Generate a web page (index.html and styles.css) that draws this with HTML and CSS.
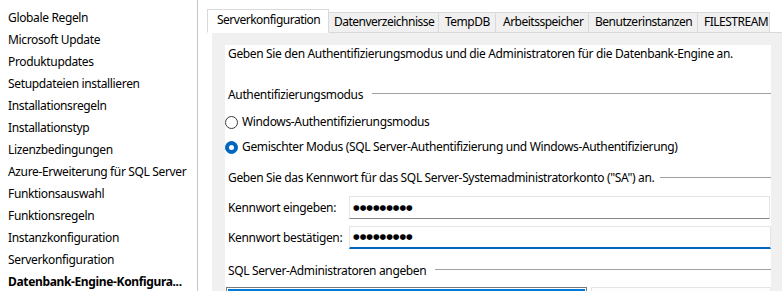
FILE: index.html
```html
<!DOCTYPE html>
<html lang="de">
<head>
<meta charset="utf-8">
<title>Datenbank-Engine-Konfiguration</title>
<link rel="stylesheet" href="styles.css">
</head>
<body>
<div class="app">
  <nav class="steps">
    <div class="step">Globale Regeln</div>
    <div class="step">Microsoft Update</div>
    <div class="step">Produktupdates</div>
    <div class="step">Setupdateien installieren</div>
    <div class="step">Installationsregeln</div>
    <div class="step">Installationstyp</div>
    <div class="step">Lizenzbedingungen</div>
    <div class="step">Azure-Erweiterung für SQL Server</div>
    <div class="step">Funktionsauswahl</div>
    <div class="step">Funktionsregeln</div>
    <div class="step">Instanzkonfiguration</div>
    <div class="step">Serverkonfiguration</div>
    <div class="step step-current">Datenbank-Engine-Konfigura...</div>
  </nav>
  <main class="main">
    <div class="tabs">
      <div class="tab tab-active tab-server">Serverkonfiguration</div>
      <div class="tab tab-data">Datenverzeichnisse</div>
      <div class="tab tab-temp">TempDB</div>
      <div class="tab tab-mem">Arbeitsspeicher</div>
      <div class="tab tab-user">Benutzerinstanzen</div>
      <div class="tab tab-fs">FILESTREAM</div>
    </div>
    <div class="tabpage">
      <div class="panel">
        <p class="intro">Geben Sie den Authentifizierungsmodus und die Administratoren für die Datenbank-Engine an.</p>

        <div class="group group-auth"><span class="group-label">Authentifizierungsmodus</span><span class="group-line"></span></div>

        <div class="radio radio-first"><span class="radio-mark"></span><span>Windows-Authentifizierungsmodus</span></div>
        <div class="radio radio-second"><span class="radio-mark radio-checked"></span><span>Gemischter Modus (SQL Server-Authentifizierung und Windows-Authentifizierung)</span></div>

        <div class="group group-pass"><span class="group-label">Geben Sie das Kennwort für das SQL Server-Systemadministratorkonto ("SA") an.</span><span class="group-line"></span></div>

        <div class="field field-first">
          <span class="field-label">Kennwort eingeben:</span>
          <div class="input"><span class="dots">●●●●●●●●●</span></div>
        </div>
        <div class="field field-second">
          <span class="field-label">Kennwort bestätigen:</span>
          <div class="input input-focus"><span class="dots">●●●●●●●●●</span></div>
        </div>

        <div class="group group-admins"><span class="group-label">SQL Server-Administratoren angeben</span><span class="group-line"></span></div>

        <div class="admins">
          <div class="admin-list"></div>
          <div class="admin-side"></div>
        </div>
      </div>
    </div>
  </main>
</div>
</body>
</html>
```

FILE: styles.css
```css
* { box-sizing: border-box; }

html, body {
  margin: 0;
  padding: 0;
  background: #ffffff;
}

body {
  font-family: "Noto Sans", "Open Sans", sans-serif;
  font-size: 12px;
  letter-spacing: -0.35px;
  color: #000000;
  width: 782px;
  height: 291px;
  overflow: hidden;
}

.app {
  display: flex;
  height: 291px;
  overflow: hidden;
}

/* left step navigation */
.steps {
  width: 198px;
  flex: none;
  border-right: 1px solid #c4c4c4;
  padding: 7px 0 0 8px;
}

.step {
  line-height: 22px;
  height: 22px;
  white-space: nowrap;
}

.step-current {
  font-weight: 700;
}

/* main area */
.main {
  flex: 1;
  display: flex;
  flex-direction: column;
  padding: 9px 0 0 9px;
  min-width: 0;
  overflow: hidden;
}

.tabs {
  display: flex;
  align-items: flex-end;
  border-bottom: 1px solid #d9d9d9;
  height: 24px;
  flex: none;
}

.tab {
  flex: none;
  margin-bottom: -1px;
  margin-left: -1px;
  border: 1px solid #d9d9d9;
  background: #f0f0f0;
  line-height: 16px;
  letter-spacing: -0.5px;
  padding: 1px 0 2px 5px;
  white-space: nowrap;
  overflow: hidden;
}

.tab-active {
  margin-left: 0;
  background: #ffffff;
  border-bottom-color: #ffffff;
  padding: 2px 0 4px 9px;
  position: relative;
  z-index: 1;
}

.tab-server { width: 122px; }
.tab-data { width: 111px; }
.tab-temp { width: 58px; padding-left: 6px; }
.tab-mem { width: 94px; padding-left: 7px; }
.tab-user { width: 110px; padding-left: 6px; }
.tab-fs { width: 73px; padding-left: 6px; }

.tabpage {
  flex: 1;
  margin-left: 5px;
  background: #f0f0f0;
  padding: 12px 11px 0 13px;
  display: flex;
  flex-direction: column;
  min-height: 0;
}

.panel {
  flex: 1;
  background: #ffffff;
  display: flex;
  flex-direction: column;
  min-height: 0;
  overflow: hidden;
}

.intro {
  margin: 1px 0 0 0;
  padding-left: 3px;
  line-height: 16px;
  white-space: nowrap;
  flex: none;
}

.group {
  display: flex;
  align-items: center;
  line-height: 16px;
  padding-left: 3px;
  white-space: nowrap;
  flex: none;
}

.group-line {
  flex: 1;
  height: 1px;
  background: #a0a0a0;
  margin: 0 0 4px 9px;
}

.group-auth { margin-top: 25px; }
.group-pass { margin-top: 15px; }
.group-pass .group-line { margin-left: 6px; margin-bottom: 2px; }
.group-admins { margin-top: 14px; }

.radio {
  display: flex;
  align-items: center;
  gap: 4px;
  line-height: 16px;
  white-space: nowrap;
  flex: none;
}

.radio-first { margin-top: 11px; }
.radio-second { margin-top: 9px; }

.radio-mark {
  width: 13px;
  height: 13px;
  border-radius: 50%;
  border: 1px solid #3a3a3a;
  background: #ffffff;
  flex: none;
  display: flex;
  align-items: center;
  justify-content: center;
}

.radio-checked {
  border-color: #0067c0;
  background: #0067c0;
}

.radio-checked::after {
  content: "";
  width: 5px;
  height: 5px;
  border-radius: 50%;
  background: #ffffff;
}

.field {
  display: flex;
  align-items: center;
  padding-left: 3px;
  flex: none;
}

.field-first { margin-top: 10px; }
.field-second { margin-top: 7px; }

.field-label {
  width: 121px;
  flex: none;
  white-space: nowrap;
}

.input {
  flex: 1;
  height: 23px;
  margin-right: 1px;
  border: 1px solid #e5e5e5;
  border-bottom: 1px solid #868686;
  background: #ffffff;
  display: flex;
  align-items: center;
  padding-left: 3px;
}

.input-focus {
  margin-right: 0;
  border-bottom: 2px solid #0067c0;
}

.dots {
  font-family: "DejaVu Sans", sans-serif;
  font-size: 7.6px;
  letter-spacing: 0;
  line-height: 10px;
}

.admins {
  display: flex;
  gap: 4px;
  margin-top: 8px;
  padding-left: 1px;
  height: 40px;
  flex: none;
}

.admin-list {
  width: 361px;
  border: 1px solid #7a7a7a;
  background: #0078d7;
  box-shadow: inset 0 0 0 1px #ffffff;
}

.admin-side {
  flex: 1;
  border: 1px solid #e5e5e5;
  background: #fdfdfd;
}
```
